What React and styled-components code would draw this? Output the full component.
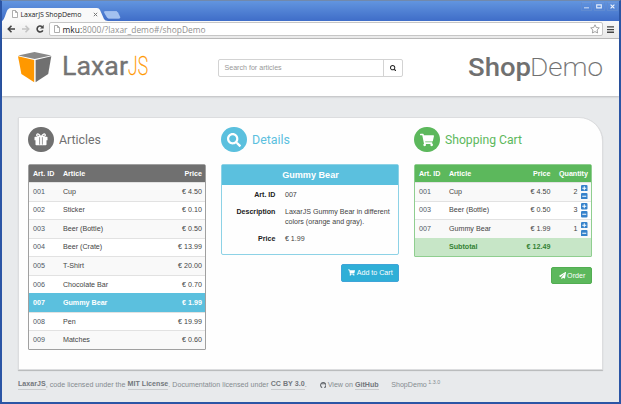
import React from "react";
import styled, { createGlobalStyle, css } from "styled-components";
import { FaSearch, FaShoppingCart, FaPaperPlane } from "react-icons/fa";

const GlobalStyle = createGlobalStyle`
  * { box-sizing: border-box; }
  body { margin: 0; overflow: hidden; font-family: "Liberation Sans", Arial, sans-serif; }
  svg { display: block; flex: none; }
`;

const Window = styled.div`
  width: 621px;
  height: 404px;
  display: flex;
  flex-direction: column;
  background: #e8eaec;
  border: solid #2b55a5;
  border-width: 1px 2px 2px;
  border-top-color: #7189ac;
`;

const TitleBar = styled.div`
  flex: none;
  height: 20px;
  display: flex;
  justify-content: space-between;
  background: linear-gradient(#6295df, #3f6dc8);
`;

const TabStrip = styled.div`
  display: grid;
  width: 120px;
  height: 20px;
  > * { grid-area: 1 / 1; }
`;

const TabLabel = styled.div`
  display: flex;
  align-items: center;
  padding: 6px 0 0 9.5px;
  gap: 3px;
  height: 20px;
  font: 7px "Open Sans", sans-serif;
  color: #222;
  white-space: nowrap;
`;

const TabTitle = styled.span`
  width: 69px;
  letter-spacing: -0.06px;
`;

const WindowButtons = styled.div`
  display: flex;
  gap: 1.5px;
  padding: 1px 1px 0 0;
`;

const WindowButton = styled.div`
  width: 11.5px;
  height: 9px;
  border: 1px solid #5f8ad1;
  border-top-color: #6b96da;
  display: flex;
  align-items: center;
  justify-content: center;
`;

const Toolbar = styled.div`
  flex: none;
  height: 18px;
  display: flex;
  align-items: center;
  background: linear-gradient(#f9f9f9, #e9e9e9);
  border-bottom: 1px solid #bcbcbc;
  padding: 0 5px 1px 5px;
`;

const Address = styled.div`
  flex: 1;
  height: 14px;
  margin-left: 4px;
  margin-right: 4px;
  padding: 0 2px 0 4px;
  display: flex;
  align-items: center;
  background: #fff;
  border: 1px solid #c6c6c6;
  border-radius: 2px;
  font: 8.4px "Open Sans", sans-serif;
  color: #909090;
`;

const Url = styled.span`
  flex: 1;
  padding-left: 2.5px;
  letter-spacing: 0.03px;
  b { font-weight: 400; color: #222; }
`;

const Header = styled.header`
  flex: none;
  height: 57px;
  display: flex;
  align-items: flex-start;
  background: #fff;
  box-shadow: 0 1px 2px rgba(0, 0, 0, 0.2);
`;

const SearchBox = styled.div`
  flex: none;
  width: 185px;
  height: 18px;
  margin: 20px 63px 0 57px;
  display: flex;
  border: 1px solid #d3d3d3;
  border-radius: 2px;
  font-size: 7.1px;
  line-height: 16px;
  color: #999;
`;

const SearchField = styled.div`
  flex: 1;
  padding-left: 5.5px;
`;

const SearchButton = styled.div`
  width: 19px;
  border-left: 1px solid #d3d3d3;
  display: flex;
  align-items: center;
  justify-content: center;
  color: #222;
`;

const Panel = styled.main`
  flex: none;
  width: 585px;
  height: 253px;
  margin: 21px 0 0 16px;
  padding: 8.5px 9.45px 0;
  display: grid;
  grid-template-columns: 178px 178px 178px;
  gap: 15px;
  background: #fefefe;
  border: 1px solid #dcdddf;
  border-radius: 0 24px 0 0;
  box-shadow: 0 1px 1px rgba(0, 0, 0, 0.22);
`;

const SectionHead = styled.div`
  height: 26px;
  margin-bottom: 11px;
  display: flex;
  align-items: center;
  gap: 5px;
  color: ${(p) => p.$color};
`;

const Disc = styled.div`
  width: 25.5px;
  height: 25.5px;
  border-radius: 50%;
  background: ${(p) => p.$color};
  color: #fff;
  display: flex;
  align-items: center;
  justify-content: center;
`;

const Table = styled.div`
  border: 1px solid ${(p) => p.$line};
  border-radius: 2px 2px 1px 1px;
  font-size: 7.15px;
  color: #444;
`;

const Row = styled.div`
  display: grid;
  grid-template-columns: ${(p) => (p.$cart ? "30px 1fr 40px 37.5px" : "30px 1fr 50px")};
  align-items: center;
  height: 18.55px;
  padding: 0 3.5px 0 3.5px;
  white-space: nowrap;
  background: #fff;
  border-top: 1px solid #e2e2e2;
  ${(p) => p.$odd && css`background: #f9f9f9;`}
  ${(p) => p.$fill && css`
    background: ${p.$fill};
    border-top-color: ${p.$fill};
    color: ${p.$ink || "#fff"};
    font-weight: 700;
  `}
`;

const HeadRow = styled(Row)`
  height: 17.5px;
`;

const Id = styled.span`
  color: ${(p) => (p.$light ? "#fff" : "#4f5965")};
`;

const Right = styled.span`
  text-align: right;
`;

const Quantity = styled.span`
  display: flex;
  justify-content: flex-end;
  align-items: center;
  gap: 4px;
`;

const Steppers = styled.span`
  display: flex;
  flex-direction: column;
  gap: 1.5px;
`;

const DetailCard = styled.div`
  height: 91px;
  border: 1px solid #8dd2e6;
  border-radius: 2px;
  font-size: 7.1px;
  line-height: 10.2px;
  color: #444;
`;

const DetailTitle = styled.h3`
  margin: 0 0 5px;
  height: 20px;
  background: #5bc0de;
  color: #fff;
  font-size: 9.1px;
  line-height: 20px;
  text-align: center;
`;

const Detail = styled.div`
  display: grid;
  grid-template-columns: 53px 1fr;
  gap: 9.5px;
  margin-bottom: 6.9px;
  b { text-align: right; color: #222; }
  span { white-space: pre-line; }
`;

const Action = styled.div`
  width: ${(p) => p.$width}px;
  height: ${(p) => p.$height}px;
  margin: ${(p) => p.$top}px 0 0 auto;
  display: flex;
  align-items: center;
  justify-content: center;
  gap: 1.5px;
  border-radius: 2px;
  border: 1px solid ${(p) => p.$edge};
  background: ${(p) => p.$fill};
  color: #fff;
  font-size: 7.1px;
`;

const Footer = styled.footer`
  display: flex;
  align-items: center;
  padding: 10px 0 0 16px;
  font-size: 7.1px;
  letter-spacing: 0.02px;
  line-height: 9px;
  color: #858a90;
  white-space: pre;
`;

const Link = styled.b`
  color: #73777c;
  border-bottom: 1px solid #c9cbcd;
`;

const GithubLine = styled.span`
  display: flex;
  align-items: center;
  gap: 1.5px;
  margin: 0 12.5px 0 13px;
`;

const Version = styled.span`
  font-size: 5.3px;
  margin: -5px 0 0 1.5px;
`;

const PageIcon = () => (
  <svg width="6" height="8" viewBox="0 0 6 8" fill="#fff" stroke="#999" strokeWidth=".8">
    <path d="M.5.5h3l2 2v5h-5zM3.5.5v2h2" />
  </svg>
);

const GiftIcon = () => (
  <svg width="14" height="13" viewBox="0 0 14 13">
    <path d="M1 3.700h12q.5 0 .5.500v3H.5v-3q0-.5.500-.5zM1.500 7.200h11v4.300q0 .8-.8.800H2.300q-.8 0-.8-.8z" fill="#fff" />
    <path d="M6.800 3.500C4.900.5 3.400.6 2.900 1.500c-.5 1.200.3 2 1.400 2h5.400c1.100 0 1.900-.8 1.400-2-.5-.9-2-1-3.900 2" fill="none" stroke="#fff" strokeWidth="1.300" />
    <path d="M5.600 4.200v7.400M8.400 4.200v7.400" stroke="#707070" strokeWidth=".7" />
  </svg>
);

const GithubMark = () => (
  <svg width="6.5" height="6.5" viewBox="0 0 13 13">
    <path d="M4.400 11.400A5.300 5.300 0 1 1 8.600 11.400" fill="none" stroke="#62666b" strokeWidth="2.100" />
    <path d="M3 4.300V2.500l2.200.7h2.600l2.200-.7v1.800" fill="#62666b" />
  </svg>
);

const Stepper = ({ plus }) => (
  <svg width="6.5" height="6.5" viewBox="0 0 13 13">
    <rect width="13" height="13" rx="2.2" fill="#3682cb" />
    <path d={plus ? "M2.500 6.500h8M6.500 2.500v8" : "M2.500 6.500h8"} stroke="#fff" strokeWidth="2" />
  </svg>
);

const Brand = () => (
  <svg width="159" height="57" viewBox="2 39 159 57" fontFamily="Roboto, sans-serif" fontSize="25.5">
    <path d="M18.2 55.4 34.5 52l16.7 3.4L34.7 59z" fill="#898989" />
    <path d="M18 56.2 34.2 60v22.2L21.4 74z" fill="#ff9800" />
    <path d="M51.3 56.2 35.6 60v22.2L48.2 74z" fill="#707070" />
    <text x="62" y="74.6" fontWeight="400" fill="#747474" stroke="#747474" strokeWidth=".3" textLength="66" lengthAdjust="spacingAndGlyphs">Laxar</text>
    <text x="128" y="74.6" fontWeight="200" fill="#ff9800" stroke="#ff9800" strokeWidth=".35" textLength="20" lengthAdjust="spacingAndGlyphs">JS</text>
  </svg>
);

const ShopTitle = () => (
  <svg width="153" height="57" viewBox="466 39 153 57" fontFamily="Roboto, sans-serif" fontSize="26.5" fill="#707070">
    <text x="468" y="75.5" fontWeight="500" textLength="63" lengthAdjust="spacingAndGlyphs">Shop</text>
    <text x="530" y="75.5" fontWeight="200" stroke="#707070" strokeWidth=".15" textLength="73" lengthAdjust="spacingAndGlyphs">Demo</text>
  </svg>
);

const HeadingText = ({ children, width }) => (
  <svg width={width + 4} height="20" viewBox={`0 0 ${width + 4} 20`}>
    <text x="0" y="14.2" fontFamily="Roboto, sans-serif" fontSize="12" fontWeight="400" fill="currentColor" textLength={width} lengthAdjust="spacingAndGlyphs">{children}</text>
  </svg>
);

const Heading = ({ icon, color, width, children }) => (
  <SectionHead $color={color}>
    <Disc $color={color}>{icon}</Disc>
    <HeadingText width={width}>{children}</HeadingText>
  </SectionHead>
);

const articles = [
  ["001", "Cup", "4.50"],
  ["002", "Sticker", "0.10"],
  ["003", "Beer (Bottle)", "0.50"],
  ["004", "Beer (Crate)", "13.99"],
  ["005", "T-Shirt", "20.00"],
  ["006", "Chocolate Bar", "0.70"],
  ["007", "Gummy Bear", "1.99"],
  ["008", "Pen", "19.99"],
  ["009", "Matches", "0.60"],
];

const cart = [
  ["001", "Cup", "4.50", 2],
  ["003", "Beer (Bottle)", "0.50", 3],
  ["007", "Gummy Bear", "1.99", 1],
];

const Browser = () => (
  <>
    <TitleBar>
      <TabStrip>
        <svg width="120" height="20" viewBox="2 1 120 20">
          <path d="M2 21C5 20 6 10 8.5 9Q9 8 11 8H97q2 0 3 2l4 9q1 2 4 2z" fill="#f9f9f9" />
          <path d="M105 11.500h11q1.200 0 1.700 1l2.100 4.500q.5 1.300-.8 1.300h-10q-1.300 0-1.800-1.100l-2.600-4.500q-.7-1.200.4-1.200z" fill="#a3c1ef" stroke="#b5cdf3" strokeWidth=".6" />
        </svg>
        <TabLabel>
          <PageIcon />
          <TabTitle>LaxarJS ShopDemo</TabTitle>
          <svg width="5" height="5" viewBox="0 0 5 5" stroke="#777" strokeWidth="1"><path d="m.8.8 3.400 3.400m0-3.400L.8 4.200" /></svg>
        </TabLabel>
      </TabStrip>
      <WindowButtons>
        <WindowButton><svg width="5" height="5" viewBox="0 0 5 5"><path d="M0 3h5v1.500H0z" fill="#a9c3ec" /></svg></WindowButton>
        <WindowButton><svg width="6" height="5" viewBox="0 0 6 5"><path d="M.7.9h4.600v3H.7z" fill="none" stroke="#e4edfb" strokeWidth="1.100" /></svg></WindowButton>
        <WindowButton><svg width="5" height="5" viewBox="0 0 5 5" stroke="#f2f6fc" strokeWidth="1.100"><path d="m.6.6 3.800 3.800m0-3.800L.6 4.400" /></svg></WindowButton>
      </WindowButtons>
    </TitleBar>
    <Toolbar>
      <svg width="38" height="10" viewBox="0 0 38 10" fill="none" strokeWidth="1.600">
        <path d="M8 5H1.500M4.500 1.800 1.300 5l3.200 3.200" stroke="#444" />
        <path d="M15 5h6.500M18.500 1.800 21.700 5l-3.200 3.200" stroke="#c4c4c4" />
        <path d="M35.800 6.300A3 3 0 1 1 35 2.600" stroke="#444" />
        <path d="M36.700.8v3.600h-3.600z" fill="#444" />
      </svg>
      <Address>
        <PageIcon />
        <Url><b>mku:</b>8000/?laxar_demo#/shopDemo</Url>
        <svg width="10" height="10" viewBox="0 0 10 10" fill="#fff" stroke="#999" strokeWidth=".9"><path d="m5 .8 1.300 2.700 3 .4-2.200 2.100.5 3L5 7.600 2.400 9l.5-3L.7 3.900l3-.4z" /></svg>
      </Address>
      <svg width="7" height="7" viewBox="0 0 7 7"><path d="M0 .2h7v1.400H0zM0 2.900h7v1.400H0zM0 5.600h7V7H0z" fill="#444" /></svg>
    </Toolbar>
  </>
);

const Articles = () => (
  <section>
    <Heading icon={<GiftIcon />} color="#707070" width={42}>Articles</Heading>
    <Table $line="#a0a0a0">
      <HeadRow $fill="#707070"><span>Art. ID</span><span>Article</span><Right>Price</Right></HeadRow>
      {articles.map(([id, name, price], i) => (
        <Row key={id} $odd={i % 2 === 0} $fill={id === "007" ? "#5bc0de" : undefined}>
          <Id $light={id === "007"}>{id}</Id><span>{name}</span><Right>€ {price}</Right>
        </Row>
      ))}
    </Table>
  </section>
);

const Details = () => (
  <section>
    <Heading icon={<FaSearch size={14} />} color="#5bc0de" width={38}>Details</Heading>
    <DetailCard>
      <DetailTitle>Gummy Bear</DetailTitle>
      <Detail><b>Art. ID</b><span>007</span></Detail>
      <Detail><b>Description</b><span>{"LaxarJS Gummy Bear in different\ncolors (orange and gray)."}</span></Detail>
      <Detail><b>Price</b><span>€ 1.99</span></Detail>
    </DetailCard>
    <Action $width={58} $height={18} $top={9} $fill="#2fafd7" $edge="#3fa4d8"><FaShoppingCart size={7} />Add to Cart</Action>
  </section>
);

const Cart = () => (
  <section>
    <Heading icon={<FaShoppingCart size={14} />} color="#5cb85c" width={77}>Shopping Cart</Heading>
    <Table $line="#8fce8f">
      <HeadRow $cart $fill="#5cb85c"><span>Art. ID</span><span>Article</span><Right>Price</Right><Right>Quantity</Right></HeadRow>
      {cart.map(([id, name, price, count], i) => (
        <Row $cart key={id} $odd={i % 2 === 0}>
          <Id>{id}</Id><span>{name}</span><Right>€ {price}</Right>
          <Quantity>{count}<Steppers><Stepper plus /><Stepper /></Steppers></Quantity>
        </Row>
      ))}
      <Row $cart $fill="#c7e6c7" $ink="#348234"><span /><span>Subtotal</span><Right>€ 12.49</Right></Row>
    </Table>
    <Action $width={41} $height={17} $top={10} $fill="#5cb85c" $edge="#52ad52"><FaPaperPlane size={7} />Order</Action>
  </section>
);

export default function App() {
  return (
    <Window>
      <GlobalStyle />
      <Browser />
      <Header>
        <Brand />
        <SearchBox><SearchField>Search for articles</SearchField><SearchButton><FaSearch size={6.5} /></SearchButton></SearchBox>
        <ShopTitle />
      </Header>
      <Panel><Articles /><Details /><Cart /></Panel>
      <Footer>
        <Link>LaxarJS</Link>, code licensed under the <Link>MIT License</Link>. Documentation licensed under <Link>CC BY 3.0</Link>.
        <GithubLine><GithubMark /><span>View on <Link>GitHub</Link></span></GithubLine>
        ShopDemo<Version>1.3.0</Version>
      </Footer>
    </Window>
  );
}
